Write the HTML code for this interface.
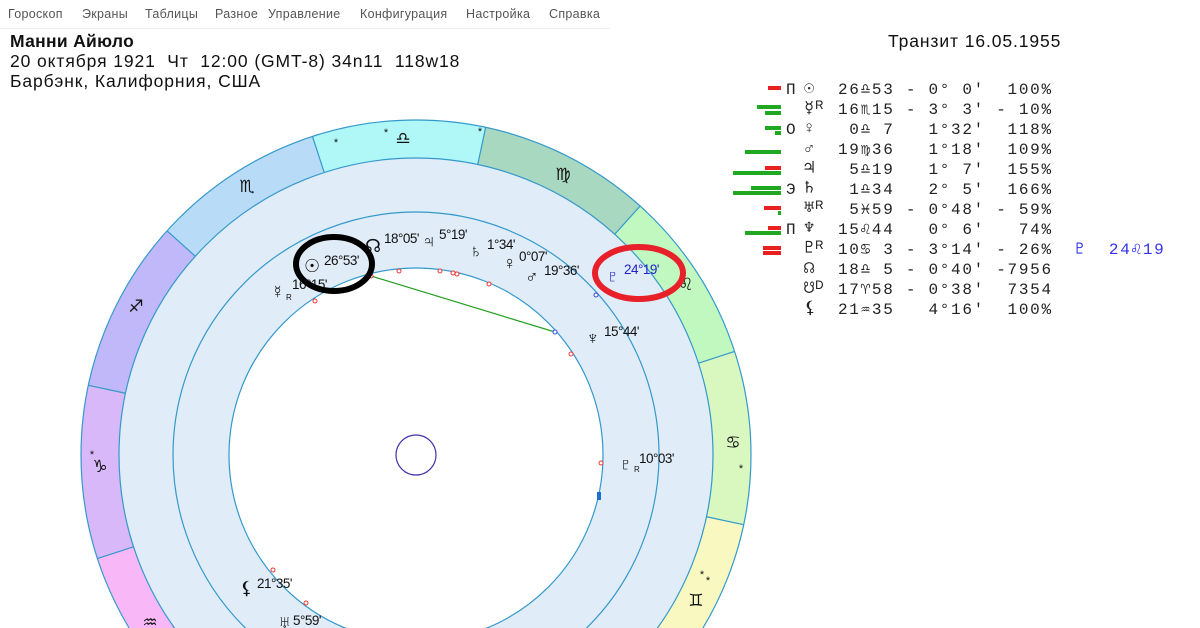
<!DOCTYPE html>
<html style="overflow:hidden"><head><meta charset="utf-8">
<style>
body{margin:0;width:1200px;height:628px;overflow:hidden;background:#fff;font-family:"Liberation Sans","DejaVu Sans",sans-serif;position:relative}
.m{position:absolute;top:7px;font-size:12.5px;color:#555;letter-spacing:0.3px}
.t{position:absolute;font-size:17.5px;color:#111;white-space:nowrap;letter-spacing:0.9px}
.r{position:absolute;font-family:"Liberation Mono","DejaVu Sans Mono",monospace;font-size:16px;color:#222;white-space:pre;line-height:20px}
.b{position:absolute;height:4px}
</style></head><body>
<div class="m" style="left:8px">Гороскоп</div>
<div class="m" style="left:82px">Экраны</div>
<div class="m" style="left:145px">Таблицы</div>
<div class="m" style="left:215px">Разное</div>
<div class="m" style="left:268px">Управление</div>
<div class="m" style="left:360px">Конфигурация</div>
<div class="m" style="left:466px">Настройка</div>
<div class="m" style="left:549px">Справка</div>
<div style="position:absolute;left:0;top:28px;width:610px;height:1px;background:#eee"></div>
<div class="t" style="left:10px;top:31px;font-weight:bold;letter-spacing:0.3px">Манни Айюло</div>
<div class="t" style="left:10px;top:51px">20 октября 1921&nbsp; Чт&nbsp; 12:00 (GMT-8) 34n11&nbsp; 118w18</div>
<div class="t" style="left:10px;top:71px">Барбэнк, Калифорния, США</div>
<div class="t" style="left:888px;top:31px">Транзит 16.05.1955</div>

<svg width="1200" height="628" style="position:absolute;left:0;top:0" font-family="Liberation Sans, DejaVu Sans, sans-serif">
<g transform="translate(416,455)">
<circle r="335" fill="#e0ecf8"/>
<g fill="none" stroke-width="38" stroke-dasharray="165.46 2000">
<circle r="316" stroke="#b0f8f8" transform="rotate(-108)"/>
<circle r="316" stroke="#a8d8c0" transform="rotate(-78)"/>
<circle r="316" stroke="#c0f8c0" transform="rotate(-48)"/>
<circle r="316" stroke="#d8f8c0" transform="rotate(-18)"/>
<circle r="316" stroke="#f8f8c0" transform="rotate(12)"/>
<circle r="316" stroke="#f8e0c0" transform="rotate(42)"/>
<circle r="316" stroke="#b8dcf8" transform="rotate(-138)"/>
<circle r="316" stroke="#c0b8f8" transform="rotate(-168)"/>
<circle r="316" stroke="#d8b8f8" transform="rotate(-198)"/>
<circle r="316" stroke="#f8b8f8" transform="rotate(-228)"/>
<circle r="316" stroke="#f8c0d8" transform="rotate(-258)"/>
<circle r="316" stroke="#f8d0c0" transform="rotate(-288)"/>
</g>
<g stroke="#3399cc" stroke-width="1.2">
<line x1="0" y1="-297" x2="0" y2="-335" transform="rotate(-18)"/>
<line x1="0" y1="-297" x2="0" y2="-335" transform="rotate(12)"/>
<line x1="0" y1="-297" x2="0" y2="-335" transform="rotate(42)"/>
<line x1="0" y1="-297" x2="0" y2="-335" transform="rotate(72)"/>
<line x1="0" y1="-297" x2="0" y2="-335" transform="rotate(102)"/>
<line x1="0" y1="-297" x2="0" y2="-335" transform="rotate(132)"/>
<line x1="0" y1="-297" x2="0" y2="-335" transform="rotate(-48)"/>
<line x1="0" y1="-297" x2="0" y2="-335" transform="rotate(-78)"/>
<line x1="0" y1="-297" x2="0" y2="-335" transform="rotate(-108)"/>
<line x1="0" y1="-297" x2="0" y2="-335" transform="rotate(-138)"/>
</g>
<g fill="none" stroke="#3399cc" stroke-width="1.2">
<circle r="335"/><circle r="297"/><circle r="243"/>
</g>
<circle r="187" fill="#fff" stroke="#3399cc" stroke-width="1.2"/>
<circle r="20" fill="none" stroke="#4433aa" stroke-width="1.2"/>
</g>
<line x1="371" y1="276" x2="555" y2="332" stroke="#22a022" stroke-width="1.2"/>
<g fill="#fff" stroke="#ee3333" stroke-width="1">
<circle cx="371" cy="276" r="2"/><circle cx="315" cy="301" r="2"/><circle cx="399" cy="271" r="2"/><circle cx="440" cy="271" r="2"/><circle cx="453" cy="273" r="2"/><circle cx="457" cy="274" r="2"/><circle cx="489" cy="284" r="2"/><circle cx="571" cy="354" r="2"/><circle cx="601" cy="463" r="2"/><circle cx="273" cy="570" r="2"/><circle cx="306" cy="603" r="2"/>
</g>
<g fill="#fff" stroke="#3344dd" stroke-width="1"><circle cx="596" cy="295" r="2"/><circle cx="555" cy="332" r="2"/></g>
<rect x="597" y="492" width="4" height="8" fill="#1a6fd0"/>
<g font-size="17" fill="#111" text-anchor="middle">
<text x="403" y="144">♎</text><text x="563" y="180">♍</text><text x="686" y="290">♌</text><text x="733" y="448">♋</text><text x="696" y="606">♊</text><text x="247" y="192">♏</text><text x="136" y="312">♐</text><text x="100" y="472">♑</text><text x="150" y="628">♒</text>
<text x="336" y="146" font-size="11">*</text><text x="386" y="136" font-size="11">*</text><text x="480" y="135" font-size="11">*</text><text x="741" y="472" font-size="11">*</text><text x="702" y="578" font-size="11">*</text><text x="708" y="584" font-size="11">*</text><text x="92" y="458" font-size="11">*</text>
</g>
<g font-size="13.5" fill="#111" style="letter-spacing:-0.5px">
<g font-size="18"><text x="304" y="272">☉</text><text x="365" y="252">☊</text><text x="422" y="247">♃</text><text x="469" y="257">♄</text><text x="503" y="269">♀</text><text x="525" y="283">♂</text><text x="271" y="298">☿</text><text x="586" y="344">♆</text><text x="619" y="470">♇</text><text x="240" y="594">⚸</text><text x="278" y="628">♅</text><text x="606" y="282" fill="#2222cc">♇</text></g>
<text x="324" y="265">26°53'</text>
<text x="384" y="243">18°05'</text>
<text x="439" y="239">5°19'</text>
<text x="487" y="249">1°34'</text>
<text x="519" y="261">0°07'</text>
<text x="544" y="275">19°36'</text>
<text x="286" y="300" font-size="8">R</text><text x="292" y="289">16°15'</text>
<text x="604" y="336">15°44'</text>
<text x="634" y="472" font-size="8">R</text><text x="639" y="463">10°03'</text>
<text x="257" y="588">21°35'</text>
<text x="293" y="625">5°59'</text>
<text x="624" y="274" fill="#2222cc">24°19'</text>
</g>
<ellipse cx="334" cy="264" rx="38" ry="27" fill="none" stroke="#000" stroke-width="6"/>
<ellipse cx="639" cy="273" rx="44" ry="26" fill="none" stroke="#e8202a" stroke-width="6"/>
</svg>

<div class="b" style="left:768px;top:86px;width:13px;background:#e82020"></div>
<div class="b" style="left:757px;top:105px;width:24px;background:#20a820"></div>
<div class="b" style="left:765px;top:111px;width:16px;background:#20a820"></div>
<div class="b" style="left:765px;top:126px;width:16px;background:#20a820"></div>
<div class="b" style="left:775px;top:131px;width:6px;background:#20a820"></div>
<div class="b" style="left:745px;top:150px;width:36px;background:#20a820"></div>
<div class="b" style="left:765px;top:166px;width:16px;background:#e82020"></div>
<div class="b" style="left:733px;top:171px;width:48px;background:#20a820"></div>
<div class="b" style="left:751px;top:186px;width:30px;background:#20a820"></div>
<div class="b" style="left:733px;top:191px;width:48px;background:#20a820"></div>
<div class="b" style="left:764px;top:206px;width:17px;background:#e82020"></div>
<div class="b" style="left:778px;top:211px;width:3px;background:#20a820"></div>
<div class="b" style="left:768px;top:226px;width:13px;background:#e82020"></div>
<div class="b" style="left:745px;top:231px;width:36px;background:#20a820"></div>
<div class="b" style="left:763px;top:246px;width:18px;background:#e82020"></div>
<div class="b" style="left:763px;top:251px;width:18px;background:#e82020"></div>

<div class="r" style="left:786px;top:80px">П
&nbsp;
О
&nbsp;
&nbsp;
Э
&nbsp;
П</div>
<div class="r" style="left:804px;top:80px;font-size:17px">☉
☿ᴿ
♀
♂
♃
♄
♅ᴿ
♆
♇ᴿ
☊
☋ᴰ
⚸</div>
<div class="r" style="left:838px;top:80px;letter-spacing:1.7px">26♎53 - 0° 0'  100%
16♏15 - 3° 3' - 10%
 0♎ 7   1°32'  118%
19♍36   1°18'  109%
 5♎19   1° 7'  155%
 1♎34   2° 5'  166%
 5♓59 - 0°48' - 59%
15♌44   0° 6'   74%
10♋ 3 - 3°14' - 26%
18♎ 5 - 0°40' -7956
17♈58 - 0°38'  7354
21♒35   4°16'  100%</div>
<div class="r" style="left:1075px;top:240px;color:#3333ee;letter-spacing:1.7px">♇  24♌19</div>
</body></html>
